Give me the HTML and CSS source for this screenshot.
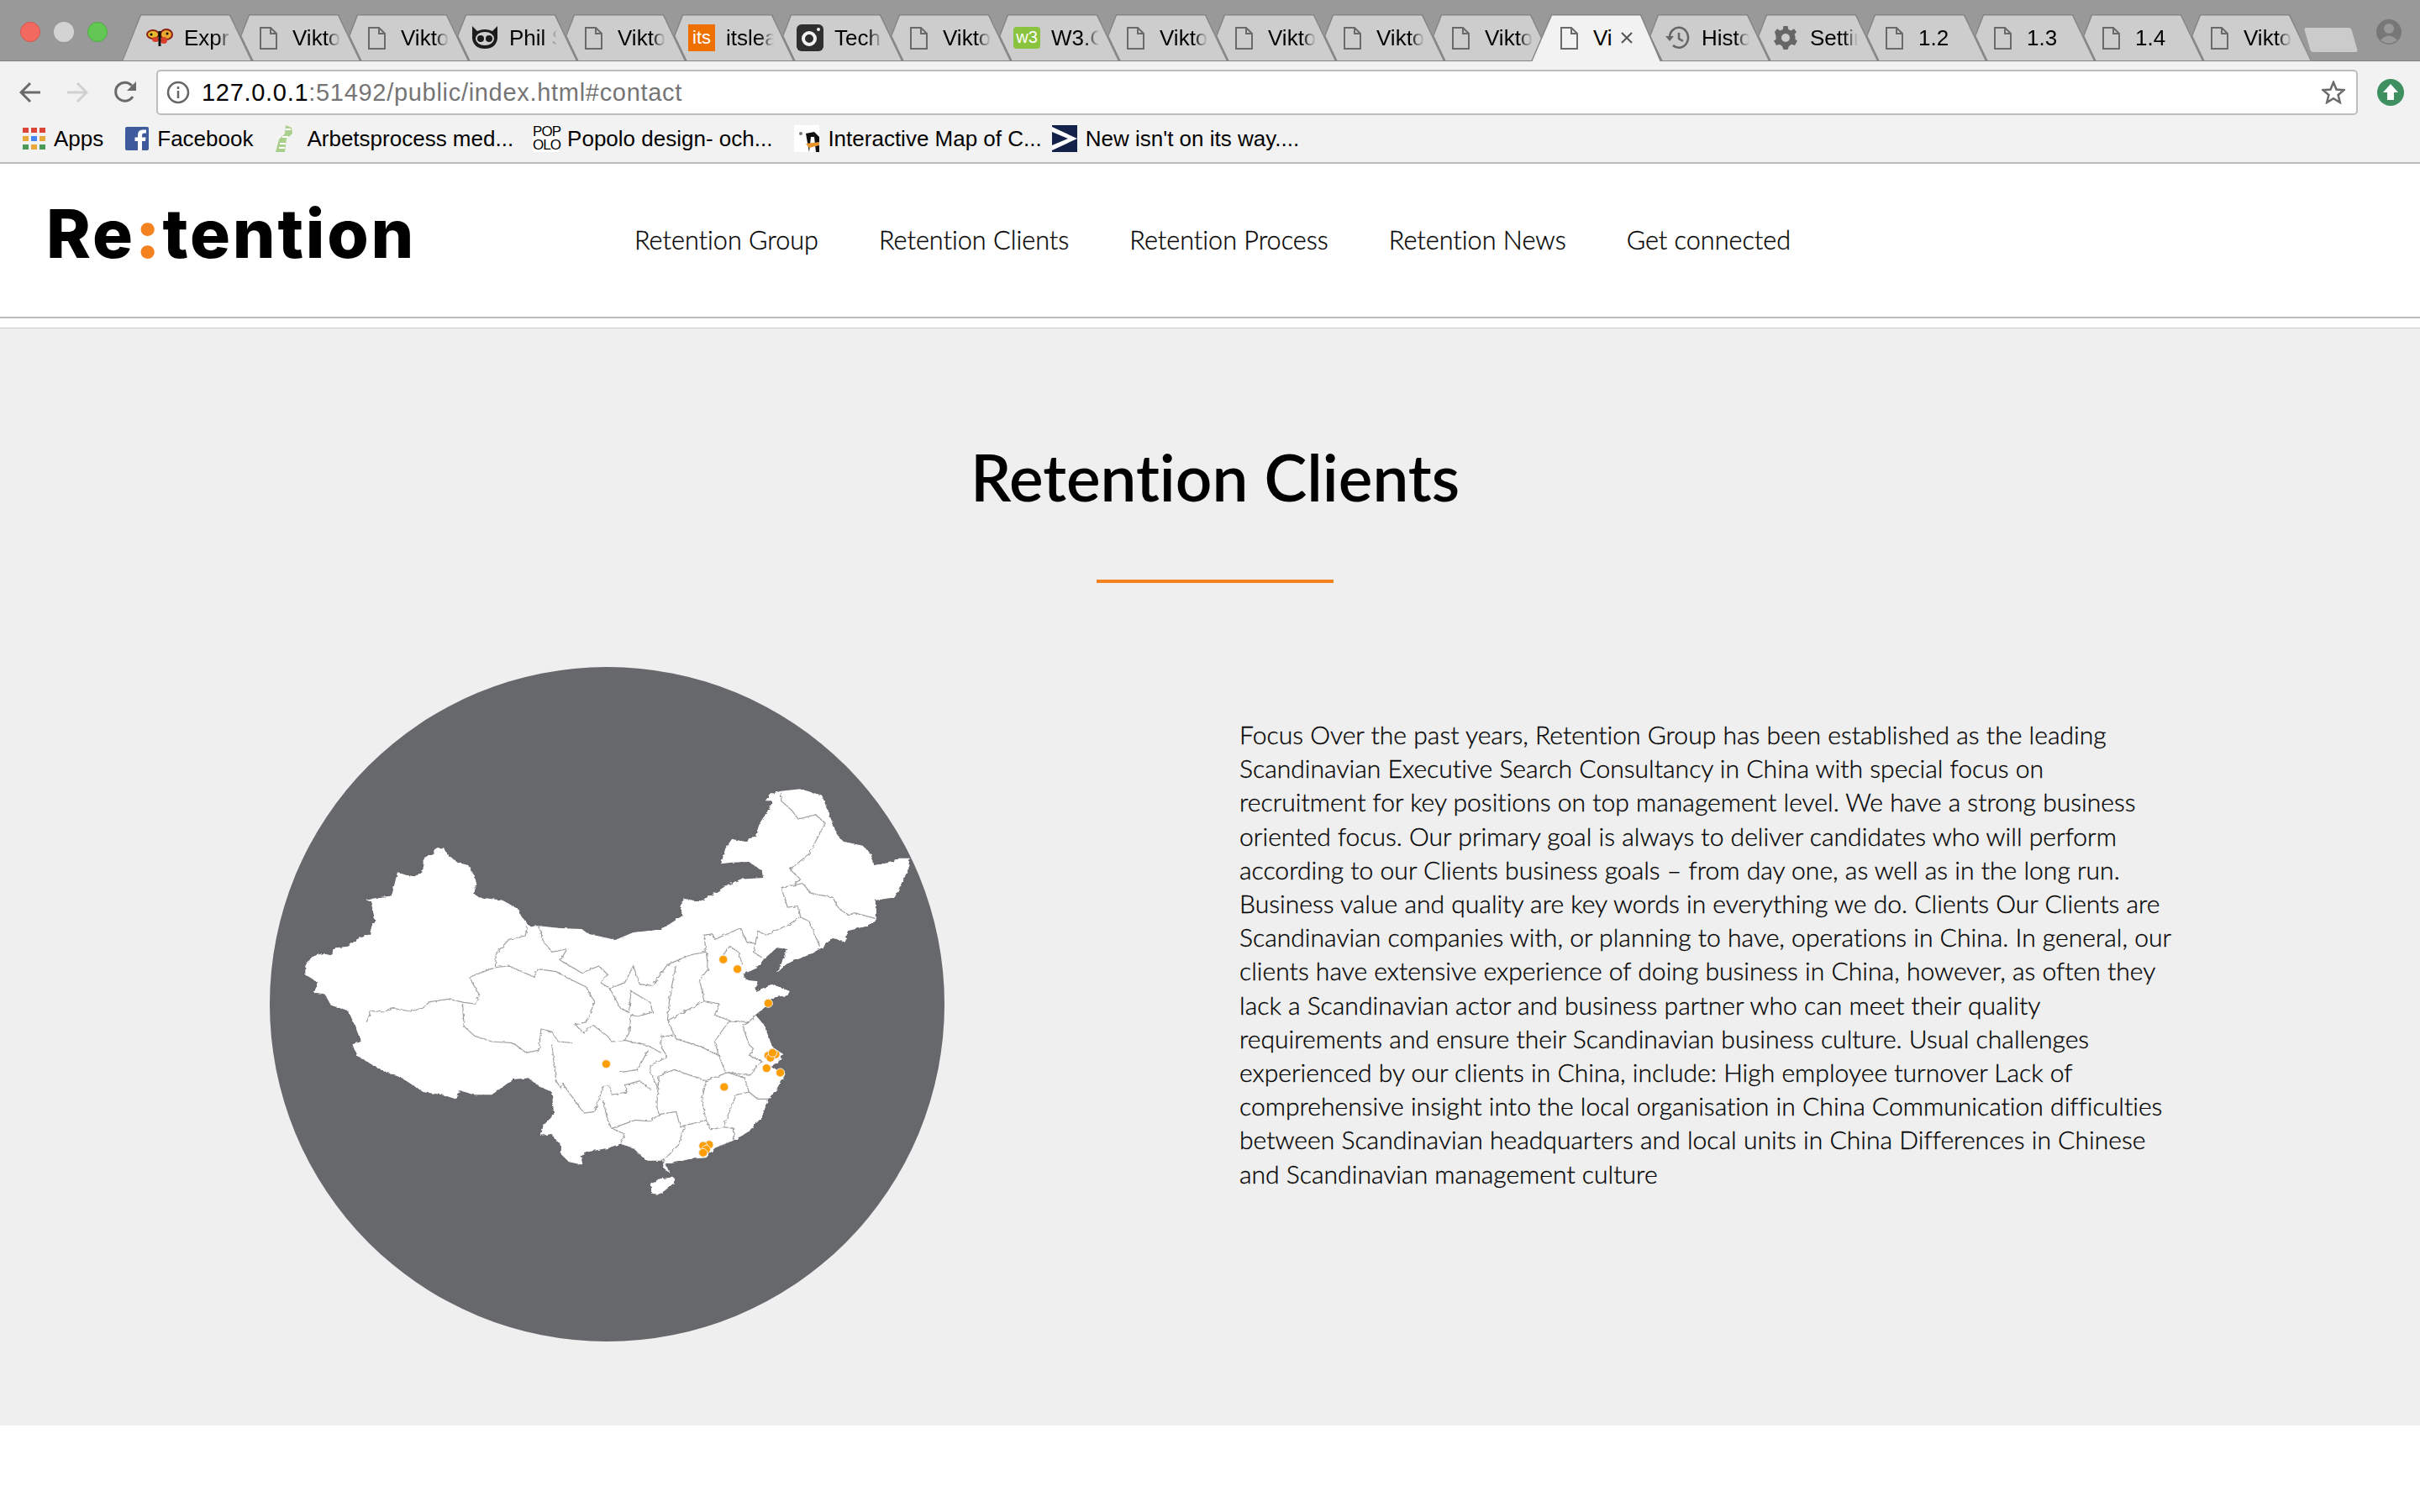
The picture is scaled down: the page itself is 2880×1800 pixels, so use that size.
FILE: index.html
```html
<!DOCTYPE html>
<html lang="en">
<head>
    <meta charset="UTF-8">
    <title>Retention</title>
    <link rel="stylesheet" href="styles.css">
</head>
<body>

    <svg class="sprites" width="0" height="0">
        <symbol id="page" viewBox="0 0 21 27">
            <path d="M1 1H13L20 8V26H1ZM13 1V8H20" fill="none" stroke="#6a6a6a" stroke-width="2"/>
        </symbol>
        <filter id="rough" x="-5%" y="-5%" width="110%" height="110%">
            <feTurbulence type="fractalNoise" baseFrequency="0.09" numOctaves="2" seed="4"/>
            <feDisplacementMap in="SourceGraphic" scale="9"/>
        </filter>
    </svg>

    <!-- Browser chrome -->
    <div class="tabstrip">
        <div class="lights">
            <span class="light light-red"></span>
            <span class="light light-grey"></span>
            <span class="light light-green"></span>
        </div>
        <div class="tabs">
            <div class="tab">
                <span class="fav">
                    <svg width="32" height="22" viewBox="0 0 32 22">
                        <ellipse cx="8" cy="7" rx="7" ry="5" fill="#e8b92e" stroke="#8a1f12" stroke-width="2"/>
                        <ellipse cx="24" cy="7" rx="7" ry="6" fill="#e8a92e" stroke="#8a1f12" stroke-width="2"/>
                        <ellipse cx="11" cy="13" rx="4" ry="3" fill="#d9402a"/>
                        <ellipse cx="21" cy="14" rx="4" ry="4" fill="#d9402a"/>
                        <path d="M16 3V21" stroke="#111" stroke-width="3"/>
                        <circle cx="6" cy="7" r="1.500" fill="#111"/>
                        <circle cx="25" cy="6" r="1.500" fill="#111"/>
                    </svg>
                </span>
                <span class="tab-title">Expr</span>
            </div>
            <div class="tab"><span class="fav"><svg class="page-icon"><use href="#page"/></svg></span><span class="tab-title">Vikto</span></div>
            <div class="tab"><span class="fav"><svg class="page-icon"><use href="#page"/></svg></span><span class="tab-title">Vikto</span></div>
            <div class="tab">
                <span class="fav">
                    <svg width="34" height="28" viewBox="0 0 34 28">
                        <path d="M2 0L8 6Q17 2 26 6L32 0V15Q30 27 17 27Q4 27 2 15Z" fill="#1b1b1b"/>
                        <ellipse cx="17" cy="15" rx="11" ry="8" fill="#cfcfcf"/>
                        <circle cx="12" cy="15" r="4" fill="#1b1b1b"/>
                        <circle cx="22" cy="15" r="4" fill="#1b1b1b"/>
                    </svg>
                </span>
                <span class="tab-title">Phil S</span>
            </div>
            <div class="tab"><span class="fav"><svg class="page-icon"><use href="#page"/></svg></span><span class="tab-title">Vikto</span></div>
            <div class="tab"><span class="fav"><span class="fav-its">its</span></span><span class="tab-title">itslea</span></div>
            <div class="tab">
                <span class="fav">
                    <svg width="32" height="32" viewBox="0 0 32 32">
                        <rect width="32" height="32" rx="6" fill="#2f2f2f"/>
                        <circle cx="15" cy="17" r="7" fill="none" stroke="#f2f2f2" stroke-width="4"/>
                        <circle cx="26" cy="6" r="2" fill="#f2f2f2"/>
                    </svg>
                </span>
                <span class="tab-title">Tech</span>
            </div>
            <div class="tab"><span class="fav"><svg class="page-icon"><use href="#page"/></svg></span><span class="tab-title">Vikto</span></div>
            <div class="tab"><span class="fav"><span class="fav-w3">w3</span></span><span class="tab-title">W3.C</span></div>
            <div class="tab"><span class="fav"><svg class="page-icon"><use href="#page"/></svg></span><span class="tab-title">Vikto</span></div>
            <div class="tab"><span class="fav"><svg class="page-icon"><use href="#page"/></svg></span><span class="tab-title">Vikto</span></div>
            <div class="tab"><span class="fav"><svg class="page-icon"><use href="#page"/></svg></span><span class="tab-title">Vikto</span></div>
            <div class="tab"><span class="fav"><svg class="page-icon"><use href="#page"/></svg></span><span class="tab-title">Vikto</span></div>
            <div class="tab tab-active">
                <span class="fav"><svg class="page-icon"><use href="#page"/></svg></span>
                <span class="tab-title tab-title-short">Vi</span>
                <svg class="tab-close" width="14" height="14" viewBox="0 0 14 14"><path d="M1 1L13 13M13 1L1 13" stroke="#555" stroke-width="2"/></svg>
            </div>
            <div class="tab">
                <span class="fav">
                    <svg width="30" height="28" viewBox="0 0 30 28">
                        <path d="M6 14A11 12 0 1 1 10 23" fill="none" stroke="#666" stroke-width="2.500"/>
                        <path d="M1 12H11L6 18Z" fill="#666"/>
                        <path d="M17 8V15L22 18" fill="none" stroke="#666" stroke-width="2.500"/>
                    </svg>
                </span>
                <span class="tab-title">Histo</span>
            </div>
            <div class="tab">
                <span class="fav">
                    <svg width="28" height="28" viewBox="0 0 28 28">
                        <path d="M14 9A5 5 0 1 0 14 19A5 5 0 1 0 14 9ZM11.500 0H16.500L17.300 4L20.600 5.400L24 3.200L27 7L24.500 10L25.500 12V16L28 17.500L25 23L21 21.800L18 24L16.500 28H11.500L10 24L7 21.800L3 23L0 17.500L2.500 16V12L1 7L4 3.200L7.400 5.400L10.700 4Z" fill="#666" fill-rule="evenodd"/>
                    </svg>
                </span>
                <span class="tab-title">Settin</span>
            </div>
            <div class="tab"><span class="fav"><svg class="page-icon"><use href="#page"/></svg></span><span class="tab-title">1.2</span></div>
            <div class="tab"><span class="fav"><svg class="page-icon"><use href="#page"/></svg></span><span class="tab-title">1.3</span></div>
            <div class="tab"><span class="fav"><svg class="page-icon"><use href="#page"/></svg></span><span class="tab-title">1.4</span></div>
            <div class="tab"><span class="fav"><svg class="page-icon"><use href="#page"/></svg></span><span class="tab-title">Vikto</span></div>
        </div>
        <span class="new-tab"></span>
        <svg class="profile" width="30" height="30" viewBox="0 0 30 30">
            <circle cx="15" cy="15" r="15" fill="#777"/>
            <circle cx="15" cy="11" r="6" fill="#999"/>
            <path d="M5 25Q15 14 25 25Q15 32 5 25Z" fill="#999"/>
        </svg>
    </div>

    <div class="toolbar">
        <div class="address-row">
            <svg class="nav-icon" width="26" height="26" viewBox="0 0 26 26"><path d="M25 13H3M13 2L2 13L13 24" fill="none" stroke="#6a6a6a" stroke-width="3"/></svg>
            <svg class="nav-icon" width="26" height="26" viewBox="0 0 26 26"><path d="M1 13H23M13 2L24 13L13 24" fill="none" stroke="#d0d0d0" stroke-width="3"/></svg>
            <svg class="nav-icon" width="28" height="28" viewBox="0 0 28 28"><path d="M23 19A11 11 0 1 1 22 6" fill="none" stroke="#6a6a6a" stroke-width="3"/><path d="M27 1V12H16Z" fill="#6a6a6a"/></svg>
            <div class="address-bar">
                <svg class="info-icon" width="28" height="28" viewBox="0 0 28 28">
                    <circle cx="14" cy="14" r="12" fill="none" stroke="#666" stroke-width="2.500"/>
                    <path d="M14 12V21M14 7V10" stroke="#666" stroke-width="2.500"/>
                </svg>
                <span class="url"><span class="url-host">127.0.0.1</span>:51492/public/index.html#contact</span>
                <svg class="star" width="28" height="28" viewBox="0 0 28 28"><path d="M14 2L17.500 10.500L26.500 11.200L19.600 17L21.800 26L14 21.200L6.200 26L8.400 17L1.500 11.200L10.500 10.500Z" fill="none" stroke="#6a6a6a" stroke-width="2.500"/></svg>
            </div>
            <svg class="ext" width="32" height="32" viewBox="0 0 32 32"><circle cx="16" cy="16" r="16" fill="#3f9060"/><path d="M16 6L25 16H20V25H12V16H7Z" fill="#fff"/></svg>
        </div>
        <div class="bookmarks">
            <div class="bookmark">
                <svg width="27" height="27" viewBox="0 0 27 27">
                    <rect x="0" y="0" width="7" height="6" fill="#db4437"/><rect x="10" y="0" width="7" height="6" fill="#db4437"/><rect x="20" y="0" width="7" height="6" fill="#db4437"/>
                    <rect x="0" y="10" width="7" height="6" fill="#e8a93a"/><rect x="10" y="10" width="7" height="6" fill="#4285f4"/><rect x="20" y="10" width="7" height="6" fill="#e8a93a"/>
                    <rect x="0" y="20" width="7" height="6" fill="#4b9a58"/><rect x="10" y="20" width="7" height="6" fill="#e8a93a"/><rect x="20" y="20" width="7" height="6" fill="#4b9a58"/>
                </svg>
                <span>Apps</span>
            </div>
            <div class="bookmark">
                <svg width="28" height="28" viewBox="0 0 28 28">
                    <rect width="28" height="28" rx="2" fill="#3f5b9c"/>
                    <path d="M20 28V17H24L24.500 12.500H20V10Q20 7.500 22 7.500H25V3.500H21Q15 3.500 15 9.500V12.500H11.500V17H15V28Z" fill="#fff"/>
                </svg>
                <span>Facebook</span>
            </div>
            <div class="bookmark bookmark-narrow-icon">
                <svg width="22" height="32" viewBox="0 0 22 32">
                    <path d="M13 0L20 3L21 10L14 16L12 32H1L5 17L12 10Z" fill="#a8cf8c"/>
                    <path d="M13 5H19M9 14H16M6 22H13M5 27H12" stroke="#fff" stroke-width="2"/>
                </svg>
                <span>Arbetsprocess med...</span>
            </div>
            <div class="bookmark">
                <span class="fav-popolo">POP<br>OLO</span>
                <span>Popolo design- och...</span>
            </div>
            <div class="bookmark bookmark-tight">
                <svg width="30" height="32" viewBox="0 0 30 32">
                    <rect width="30" height="32" fill="#fff"/>
                    <path d="M14 10L24 8L30 14V32H18Z" fill="#111"/>
                    <path d="M20 14L18 32H26L24 14Z" fill="#fff"/>
                    <path d="M14 22L30 20V24L18 27Z" fill="#e8932e"/>
                    <circle cx="8" cy="10" r="2" fill="#777"/>
                </svg>
                <span>Interactive Map of C...</span>
            </div>
            <div class="bookmark">
                <svg width="30" height="32" viewBox="0 0 30 32">
                    <rect width="30" height="32" fill="#14224a"/>
                    <path d="M0 2L30 16L0 30V24L19 16L0 8Z" fill="#fff"/>
                </svg>
                <span>New isn't on its way....</span>
            </div>
        </div>
    </div>

    <!-- Site -->
    <div class="header">
        <div class="logo">Re<span class="logo-colon">:</span>tention</div>
        <nav class="menu">
            <a>Retention Group</a>
            <a>Retention Clients</a>
            <a>Retention Process</a>
            <a>Retention News</a>
            <a>Get connected</a>
        </nav>
    </div>

    <div class="clients">
        <h1 class="clients-title">Retention Clients</h1>
        <div class="title-rule"></div>
        <div class="clients-row">
            <div class="map-disc">
                <svg class="map" viewBox="-18 -318 1574 2409" preserveAspectRatio="none">
                    <g filter="url(#rough)">
                        <path class="land" d="M65 750L70 735L85 715L105 705L125 712L135 685L165 680L185 655L215 637L222 595L228 590L218 520L208 515L240 503L265 500L268 490L280 415L300 425L320 430L340 410L340 365L365 345L370 328L388 328L395 350L420 380L445 390L460 430L465 460L458 490L470 505L525 515L560 545L570 575L588 607L610 607L660 615L710 618L725 635L770 650L788 657L830 630L890 620L915 600L945 570L938 530L950 510L985 520L1020 490L1050 460L1080 440L1133 435L1130 410L1100 378L1060 380L1035 385L1045 330L1060 297L1090 305L1115 285L1125 240L1150 180L1155 160L1138 160L1150 135L1175 125L1220 118L1270 140L1285 200L1305 280L1320 305L1365 320L1385 350L1390 390L1430 380L1450 365L1475 365L1470 410L1440 505L1395 515L1395 590L1370 610L1330 625L1325 665L1295 650L1270 685L1240 710L1190 740L1165 775L1175 745L1180 720L1190 690L1165 685L1135 725L1115 760L1085 780L1095 800L1120 805L1115 840L1155 815L1195 840L1190 855L1160 862L1135 900L1115 925L1135 960L1155 1040L1180 1065L1170 1090L1150 1110L1185 1135L1170 1180L1145 1225L1130 1290L1100 1340L1068 1370L1020 1400L1000 1435L960 1440L920 1455L905 1455L915 1490L900 1470L900 1445L860 1445L830 1400L800 1385L770 1400L720 1415L708 1430L712 1460L680 1450L660 1420L660 1390L640 1350L615 1355L620 1320L645 1280L640 1200L610 1180L585 1150L550 1155L500 1210L460 1210L425 1195L415 1225L385 1210L340 1200L290 1150L240 1120L185 1070L175 1030L195 1020L180 960L165 910L125 890L110 850L85 845L95 810L65 780Z"/>
                        <path class="land" d="M925 1505L925 1525L905 1550L890 1566L872 1562L872 1530L890 1510Z"/>
                        <path class="borders" d="M583 610L578 642L540 655L510 705L508 755L447 790L470 850L462 885L435 880L400 868L355 878L340 900L310 912L265 900L250 915L218 910L208 950"/>
                        <path class="borders" d="M432 885L435 965L460 1000L500 1020L550 1025L580 1060L610 1050L615 975L640 985L655 1020L690 1025"/>
                        <path class="borders" d="M508 755L540 750L600 790L605 760L650 770L680 795L720 825L740 880L720 950L695 960L715 990L735 960L770 1000L780 1020L810 1015L865 1035L895 1060"/>
                        <path class="borders" d="M610 607L620 660L640 700L675 690L660 730L710 775L750 750L770 780L755 810L775 830L810 810L830 750L845 815L875 820L910 745L965 710L1000 700L995 640L1015 635L1020 655L1080 615L1095 665L1115 670L1120 625L1140 640L1195 600L1220 575"/>
                        <path class="borders" d="M775 830L800 900L820 915L825 840L870 880L875 915L840 930L825 925L820 990L810 1015"/>
                        <path class="borders" d="M930 745L915 860L910 945L930 1010L990 1040L1030 1070L1045 1130"/>
                        <path class="borders" d="M1000 700L1005 760L985 800L995 875L910 945"/>
                        <path class="borders" d="M995 875L1030 885L1020 925L1055 945L1100 950L1115 925"/>
                        <path class="borders" d="M1040 710L1055 680L1075 700L1085 745"/>
                        <path class="borders" d="M1115 670L1110 700L1130 720"/>
                        <path class="borders" d="M1175 470L1190 540L1215 535L1220 575L1240 590L1265 680"/>
                        <path class="borders" d="M1175 470L1225 455L1245 490L1295 505L1310 545L1335 570L1345 560L1395 580"/>
                        <path class="borders" d="M1175 125L1175 160L1200 195L1215 225L1255 210L1278 240L1240 350L1195 405L1220 440L1205 460"/>
                        <path class="borders" d="M895 1000L895 1040L910 1075L870 1105L870 1130L890 1190"/>
                        <path class="borders" d="M895 1000L930 1000"/>
                        <path class="borders" d="M1055 945L1040 975L1020 1020L1030 1070"/>
                        <path class="borders" d="M1100 950L1085 965L1100 1030L1110 1045L1100 1070L1130 1090L1100 1140L1050 1130"/>
                        <path class="borders" d="M1000 1160L1050 1130L1090 1150L1100 1200L1070 1210L1040 1325L1010 1335L1000 1300L990 1230L1000 1160"/>
                        <path class="borders" d="M890 1140L925 1120L1000 1160M890 1140L885 1250L890 1280"/>
                        <path class="borders" d="M780 1330L835 1300L870 1305L890 1280L930 1270L940 1325L950 1320L1000 1300"/>
                        <path class="borders" d="M950 1320L935 1390L900 1445"/>
                        <path class="borders" d="M1040 1325L1065 1330L1065 1370"/>
                        <path class="borders" d="M1100 1200L1120 1225L1145 1225"/>
                        <path class="borders" d="M640 1030L650 1160L660 1185L665 1170L715 1275L740 1270L760 1180L775 1180L780 1210L815 1200L810 1175L845 1160L870 1190"/>
                        <path class="borders" d="M800 1130L840 1120L865 1050"/>
                        <path class="borders" d="M760 1230L770 1300L780 1330L810 1350L800 1385"/>
                    </g>
                    <ellipse class="pin" cx="1040" cy="727" rx="10" ry="15"/>
                    <ellipse class="pin" cx="1073" cy="761" rx="10" ry="15"/>
                    <ellipse class="pin" cx="1145" cy="883" rx="10" ry="15"/>
                    <ellipse class="pin" cx="767" cy="1100" rx="10" ry="15"/>
                    <ellipse class="pin" cx="1042" cy="1182" rx="10" ry="15"/>
                    <ellipse class="pin" cx="1141" cy="1115" rx="10" ry="15"/>
                    <ellipse class="pin" cx="1173" cy="1131" rx="10" ry="15"/>
                    <ellipse class="pin" cx="1145" cy="1070" rx="10" ry="15"/>
                    <ellipse class="pin" cx="1162" cy="1066" rx="10" ry="15"/>
                    <ellipse class="pin" cx="1150" cy="1078" rx="10" ry="15"/>
                    <ellipse class="pin" cx="1155" cy="1060" rx="10" ry="15"/>
                    <ellipse class="pin" cx="1007" cy="1388" rx="10" ry="15"/>
                    <ellipse class="pin" cx="993" cy="1392" rx="10" ry="15"/>
                    <ellipse class="pin" cx="1000" cy="1405" rx="10" ry="15"/>
                    <ellipse class="pin" cx="993" cy="1417" rx="10" ry="15"/>
                </svg>
            </div>
            <p class="clients-text">Focus Over the past years, Retention Group has been established as the leading<br>
Scandinavian Executive Search Consultancy in China with special focus on<br>
recruitment for key positions on top management level. We have a strong business<br>
oriented focus. Our primary goal is always to deliver candidates who will perform<br>
according to our Clients business goals – from day one, as well as in the long run.<br>
Business value and quality are key words in everything we do. Clients Our Clients are<br>
Scandinavian companies with, or planning to have, operations in China. In general, our<br>
clients have extensive experience of doing business in China, however, as often they<br>
lack a Scandinavian actor and business partner who can meet their quality<br>
requirements and ensure their Scandinavian business culture. Usual challenges<br>
experienced by our clients in China, include: High employee turnover Lack of<br>
comprehensive insight into the local organisation in China Communication difficulties<br>
between Scandinavian headquarters and local units in China Differences in Chinese<br>
and Scandinavian management culture</p>
        </div>
    </div>

</body>
</html>
```

FILE: styles.css
```css
body {
    margin: 0;
    height: 1800px;
    overflow: hidden;
    background-color: #fff;
    font-family: "Liberation Sans", Arial, sans-serif;
    font-variant-ligatures: none;
    color: #000;
}
.sprites {
    display: block;
    height: 0;
}

/* browser chrome */
.tabstrip {
    display: flex;
    height: 73px;
    background-color: #999;
    box-shadow: inset 0 -1px 0 #808080;
}
.lights {
    display: flex;
    flex: 0 0 145px;
    gap: 16px;
    padding: 26px 0 0 24px;
    box-sizing: border-box;
}
.light {
    flex: none;
    width: 24px;
    height: 24px;
    border-radius: 50%;
    box-sizing: border-box;
}
.light-red { background-color: #f2695f; border: 1px solid #d9524a; }
.light-grey { background-color: #d3d3d3; }
.light-green { background-color: #62c754; border: 1px solid #50ad44; }

.tabs {
    display: flex;
    padding-top: 17px;
}
.tab {
    position: relative;
    isolation: isolate;
    display: flex;
    align-items: center;
    flex: 0 0 155px;
    height: 56px;
    margin-right: -26px;
    font-size: 26px;
}
.tab::before,
.tab::after {
    content: "";
    position: absolute;
    inset: 0;
    z-index: -1;
}
.tab::before {
    background-color: #858585;
    clip-path: polygon(22px 0, 12px 25.700px, 26px 56px, 155px 56px, 129px 0);
}
.tab::after {
    background-color: #cdcdcd;
    clip-path: polygon(23px 1.500px, 13.500px 25.700px, 27.500px 55px, 153.500px 55px, 128px 1.500px);
}
.tab:first-child::before {
    clip-path: polygon(22px 0, 0 56px, 155px 56px, 129px 0);
}
.tab:first-child::after {
    clip-path: polygon(23px 1.500px, 1.500px 55px, 153.500px 55px, 128px 1.500px);
}
.tab-active {
    z-index: 1;
}
.tab-active::before {
    clip-path: polygon(24px 0, 0 56px, 155px 56px, 131px 0);
}
.tab-active::after {
    background-color: #f2f2f2;
    clip-path: polygon(25px 1.500px, 1.500px 56px, 153.500px 56px, 130px 1.500px);
}
.fav {
    display: flex;
    align-items: center;
    justify-content: center;
    flex: 0 0 34px;
    margin-left: 28px;
}
.page-icon {
    width: 21px;
    height: 27px;
}
.tab-title {
    width: 57px;
    margin-left: 12px;
    overflow: hidden;
    white-space: nowrap;
    -webkit-mask-image: linear-gradient(to right, #000 70%, transparent);
    mask-image: linear-gradient(to right, #000 70%, transparent);
}
.tab-title-short {
    width: 25px;
    -webkit-mask-image: none;
    mask-image: none;
}
.tab-close {
    margin-left: 8px;
}
.fav-its {
    display: block;
    width: 32px;
    height: 32px;
    background-color: #ee7000;
    color: #fff;
    font-size: 22px;
    line-height: 32px;
    text-align: center;
}
.fav-w3 {
    display: block;
    width: 32px;
    height: 26px;
    background-color: #8ac33e;
    border-radius: 4px;
    color: #fff;
    font-size: 20px;
    line-height: 24px;
    text-align: center;
}
.new-tab {
    width: 56px;
    height: 29px;
    margin: 33px 0 0 21px;
    background-color: #cbcbcb;
    border-radius: 3px;
    transform: skewX(16deg);
}
.profile {
    margin: 23px 0 0 26px;
}

.toolbar {
    height: 122px;
    background-color: #f2f2f2;
    border-bottom: 2px solid #bbb;
    box-sizing: border-box;
}
.address-row {
    display: flex;
    align-items: center;
    height: 64px;
    padding-top: 10px;
    box-sizing: border-box;
}
.nav-icon {
    flex: none;
    margin-left: 23px;
    margin-right: 7px;
}
.address-bar {
    display: flex;
    align-items: center;
    flex: none;
    width: 2620px;
    height: 54px;
    margin-left: 16px;
    background-color: #fff;
    border: 2px solid #bdbdbd;
    border-radius: 5px;
    box-sizing: border-box;
}
.info-icon {
    margin-left: 10px;
}
.url {
    flex: 1;
    margin-left: 14px;
    font-size: 29px;
    letter-spacing: 0.700px;
    color: #757575;
}
.url-host {
    color: #000;
}
.star {
    margin-right: 13px;
}
.ext {
    flex: none;
    margin-left: 23px;
}
.bookmarks {
    display: flex;
    align-items: center;
    height: 56px;
    padding-left: 27px;
    font-size: 26px;
}
.bookmark {
    display: flex;
    align-items: center;
    gap: 10px;
    margin-right: 26px;
    white-space: nowrap;
}
.bookmark-narrow-icon {
    gap: 16px;
    margin-right: 23px;
}
.bookmark-tight {
    margin-right: 12px;
}
.fav-popolo {
    display: block;
    width: 31px;
    height: 32px;
    background-color: #fff;
    font-size: 17px;
    line-height: 16px;
    letter-spacing: -1px;
    text-align: center;
}

/* site header */
.header {
    display: flex;
    align-items: center;
    height: 184px;
    border-bottom: 2px solid #bbb;
    box-sizing: border-box;
    padding-left: 55px;
}
.logo {
    width: 700px;
    margin-top: -18px;
    font-family: Inter, sans-serif;
    font-size: 80px;
    font-weight: 800;
    letter-spacing: 2.800px;
}
.logo-colon {
    color: #f58220;
    font-weight: 900;
}
.menu {
    display: flex;
    gap: 72px;
    margin-top: -2px;
    font-family: Lato, sans-serif;
    font-size: 30.600px;
    font-weight: 300;
    -webkit-text-stroke: 0.300px #000;
}

/* clients */
.clients {
    height: 1307px;
    margin-top: 11px;
    background-color: #efefef;
    border-top: 1px solid #ccc;
    box-sizing: border-box;
    overflow: hidden;
}
.clients-title {
    margin: 134px 0 0 12px;
    font-family: Lato, sans-serif;
    font-size: 76.500px;
    font-weight: 600;
    line-height: 84px;
    text-align: center;
}
.title-rule {
    width: 282px;
    height: 4px;
    margin: 81px 0 0 1305px;
    background-color: #f58220;
}
.clients-row {
    display: flex;
    align-items: flex-start;
    margin-top: 100px;
    padding-left: 321px;
}
.map-disc {
    flex: none;
    width: 803px;
    height: 803px;
    background-color: #67686c;
    border-radius: 50%;
    overflow: hidden;
}
.map {
    display: block;
    width: 100%;
    height: 100%;
}
.land {
    fill: #fff;
}
.borders {
    fill: none;
    stroke: #a0a0a0;
    stroke-width: 1.200px;
    vector-effect: non-scaling-stroke;
}
.pin {
    fill: #ff9e00;
    stroke: #eee;
    stroke-width: 1px;
    vector-effect: non-scaling-stroke;
}
.clients-text {
    width: 1115px;
    margin: 60px 0 0 351px;
    font-family: Lato, sans-serif;
    font-size: 30.100px;
    font-weight: 300;
    line-height: 40.200px;
    white-space: nowrap;
    color: #000;
    -webkit-text-stroke: 0.300px #000;
}
```
